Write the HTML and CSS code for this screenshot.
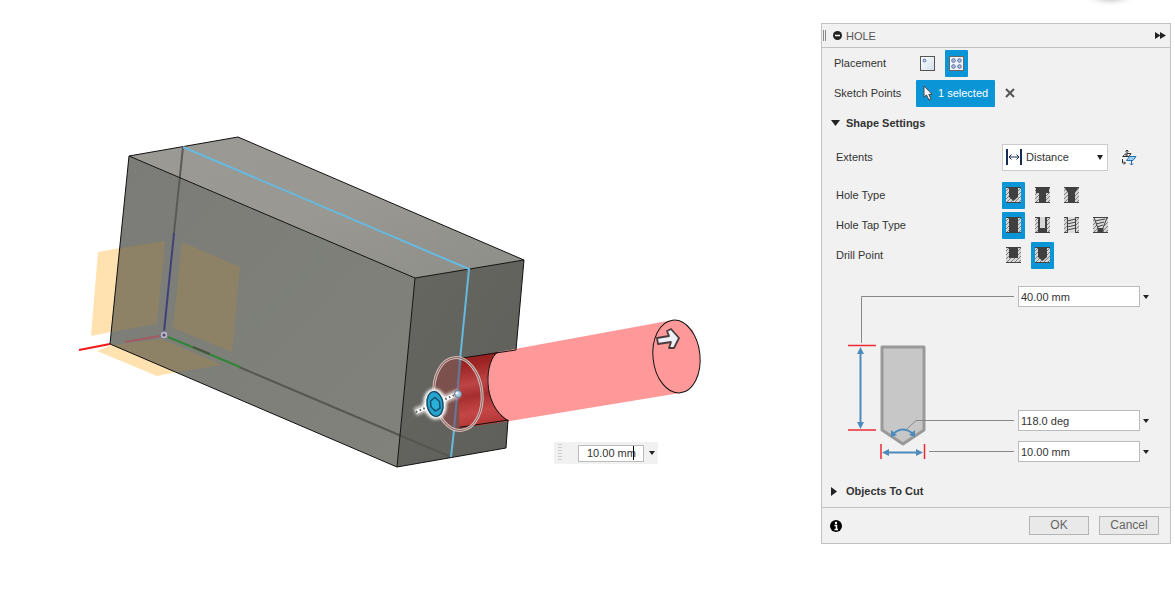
FILE: index.html
```html
<!DOCTYPE html>
<html lang="en">
<head>
<meta charset="utf-8">
<title>Hole</title>
<link rel="stylesheet" href="styles.css">
</head>
<body>
<svg class="defs" width="0" height="0" aria-hidden="true">
  <defs>
    <pattern id="hatch" width="4" height="4" patternUnits="userSpaceOnUse">
      <rect width="4" height="4" fill="#d6d6d6"/><path d="M-1 1L1 -1M0 4L4 0M3 5L5 3" stroke="#808080"/>
    </pattern>
    <linearGradient id="tile" x1="0" y1="0" x2="1" y2="1"><stop offset="0" stop-color="#fff"/><stop offset="1" stop-color="#d4dcec"/></linearGradient>
    <symbol id="block" viewBox="0 0 15 16"><rect width="15" height="16" fill="url(#hatch)"/><path d="M0 .5H15M0 15.5H15" stroke="#444"/></symbol>
  </defs>
</svg>
<main class="workspace">
  <svg class="scene" width="1175" height="589" viewBox="0 0 1175 589" role="img" aria-label="Block with a hole preview">
    <defs>
      <linearGradient id="side" x1="0" y1="0" x2="1" y2="1"><stop offset="0" stop-color="#7b7c77"/><stop offset="1" stop-color="#80827b"/></linearGradient>
      <linearGradient id="top" x1="0" y1="0" x2="1" y2="1"><stop offset="0" stop-color="#9b9994"/><stop offset=".5" stop-color="#999892"/><stop offset="1" stop-color="#8e8e88"/></linearGradient>
      <linearGradient id="end" x1="0" y1="0" x2="1" y2="1"><stop offset="0" stop-color="#666761"/><stop offset="1" stop-color="#5e5f5a"/></linearGradient>
      <linearGradient id="bore" x1="0" y1="0" x2=".15" y2="1"><stop offset="0" stop-color="#8b1d1c"/><stop offset=".2" stop-color="#9e2424"/><stop offset=".45" stop-color="#bd4545"/><stop offset=".6" stop-color="#a72e2e"/><stop offset=".82" stop-color="#c44646"/><stop offset="1" stop-color="#b43636"/></linearGradient>
      <radialGradient id="shade"><stop offset="0" stop-color="#aaa"/><stop offset="1" stop-color="#fff" stop-opacity="0"/></radialGradient>
      <filter id="glow" x="-50%" y="-50%" width="200%" height="200%"><feGaussianBlur stdDeviation="1.5"/></filter>
      <clipPath id="left-half"><path d="M420 340H463L455 440H420Z"/></clipPath>
    </defs>
    <ellipse cx="1110" cy="-3" rx="28" ry="10" fill="url(#shade)"/>
    <path d="M98 252L120 248L111 332L91 336ZM97 351L112 345L177 372L157 376Z" fill="#ffe2b0"/>
    <path d="M79 350L110 344" stroke="#f01818" stroke-width="2"/>
    <path d="M129 156L415 278L397 467L110 344Z" fill="url(#side)"/>
    <path d="M129 156L238 137L524 260L415 278Z" fill="url(#top)"/>
    <path d="M415 278L524 260L516 350L463 358L455 428L508 421L506 448L397 467Z" fill="url(#end)"/>
    <path d="M120 248L165 241L157 324L111 332ZM182 242L240 267L232 352L173 328ZM112 345L162 339L222 365L177 372Z" fill="#8e8266"/>
    <path d="M183 147L174 233" stroke="#595957" stroke-width="2"/>
    <path d="M174 233L164 332" stroke="#414079" stroke-width="2"/>
    <path d="M239 367L451 457" stroke="#565751" stroke-width="2"/>
    <path d="M168 337L240 367" stroke="#318535" stroke-width="2"/>
    <path d="M193 347L210 354" stroke="#4b5044" stroke-width="2"/>
    <path d="M125 342L160 336" stroke="#a45a61" stroke-width="2"/>
    <circle cx="164" cy="335" r="4" fill="#b9b5c5" stroke="#737181"/><circle cx="164" cy="335" r="1.5" fill="#4f4d63"/>
    <path d="M462 358L498 352C485 360 483 404 510 421L455 429Z" fill="url(#bore)"/>
    <path d="M498 352L673 320L693 330L698 371L680 393L510 421C485 408 481 368 498 352Z" fill="#ff9999"/>
    <ellipse cx="676.5" cy="356.5" rx="23.5" ry="36.5" transform="rotate(-6 676.5 356.5)" fill="#ff9999" stroke="#111"/>
    <path d="M498 352C485 360 481 404 508 421" fill="none" stroke="#111"/>
    <path d="M129 156L238 137L524 260L415 278ZM129 156L110 344L397 467L415 278M524 260L516 350L462 358M455 428L508 420L506 448L397 467" fill="none" stroke="#111"/>
    <ellipse cx="458" cy="394" rx="24.5" ry="37" transform="rotate(-6 458 394)" fill="#7c504c" clip-path="url(#left-half)"/>
    <path d="M183 147L469 269L460 360M454 430L451 457" fill="none" stroke="#67b9df" stroke-width="2"/>
    <path d="M460 360L454 430" stroke="#6c7595" stroke-width="2"/>
    <g fill="none" transform="rotate(-6 458 394)"><ellipse cx="458" cy="394" rx="24" ry="36.5" stroke="#d4bcb9" stroke-width="3"/><ellipse cx="458" cy="394" rx="24" ry="36.5" stroke="#8c6663"/></g>
    <path d="M415 412L459 393" stroke="#eee" stroke-width="8" opacity=".75" filter="url(#glow)"/>
    <ellipse cx="435" cy="404" rx="11.500" ry="15.500" transform="rotate(-8 435 404)" fill="#fff" filter="url(#glow)"/>
    <path d="M416 412L459 393" stroke="#fff" stroke-width="4"/>
    <path d="M416 412L459 393" stroke="#56545a" stroke-width="2" stroke-dasharray="1.5 2.5"/>
    <ellipse cx="435" cy="404" rx="8" ry="12.500" transform="rotate(-8 435 404)" fill="#25a4d0" stroke="#174c65" stroke-width="1.5"/>
    <path d="M430.500 401L435 397.500L439.500 401.500L440 408L435.500 411L431 407Z" fill="#2bb0da" stroke="#155169" stroke-width="1.5"/>
    <circle cx="458" cy="394" r="3.5" fill="#a8c4dc" stroke="#60738a"/><circle cx="457" cy="393" r="1.5" fill="#edf6fb"/>
    <path d="M657 338L669 336L667 331L671 329L679 338L674 348L669 348L671 342L658 344Z" fill="#edf1f7" stroke="#4a3c3e" stroke-width="1.800" stroke-linejoin="round"/>
  </svg>

  <div class="value-box">
    <span class="grip" aria-hidden="true"></span>
    <span class="live"><input class="value" aria-label="Diameter" value="10.00 mm"><i class="caret"></i></span>
    <button class="arrow" aria-label="Diameter options"></button>
  </div>

  <form class="panel">
    <header class="title">
      <span class="dock" aria-hidden="true"></span>
      <button type="button" class="plain" aria-label="Collapse"><svg width="9" height="9" viewBox="0 0 9 9"><circle cx="4.500" cy="4.500" r="4.500" fill="#222"/><path d="M2 4.500H7" stroke="#fff" stroke-width="1.500"/></svg></button>
      <h1>HOLE</h1>
      <button type="button" class="plain" aria-label="Expand"><svg width="11" height="7" viewBox="0 0 11 7"><path d="M0 0L5.500 3.500L0 7ZM5 0L11 3.500L5 7Z" fill="#222"/></svg></button>
    </header>

    <div class="row">
      <span class="label">Placement</span>
      <div class="choices">
        <button type="button" class="choice" aria-label="At point"><svg width="15" height="15" viewBox="0 0 15 15"><rect x=".5" y=".5" width="14" height="14" fill="url(#tile)" stroke="#555"/><circle cx="4.500" cy="4.500" r="1.500" fill="#b8cdf1" stroke="#627aa8"/></svg></button>
        <button type="button" class="choice on" aria-pressed="true" aria-label="From sketch"><svg width="15" height="15" viewBox="0 0 15 15"><rect x=".5" y=".5" width="14" height="14" fill="#f1f4fa" stroke="#6b6660"/><g fill="#a9c5ef" stroke="#546a97"><circle cx="4.500" cy="4.500" r="1.800"/><circle cx="10.500" cy="4.500" r="1.800"/><circle cx="4.500" cy="10.500" r="1.800"/><circle cx="10.500" cy="10.500" r="1.800"/></g></svg></button>
      </div>
    </div>
    <div class="row">
      <span class="label">Sketch Points</span>
      <button type="button" class="selected"><svg width="10" height="16" viewBox="0 0 10 16"><path d="M1 1V12L3.500 10L6 15L8 14L5.800 9.300H9Z" fill="#fff" stroke="#444"/></svg>1 selected</button>
      <button type="button" class="plain clear" aria-label="Clear selection"><svg width="10" height="10" viewBox="0 0 10 10"><path d="M1 1L9 9M9 1L1 9" stroke="#555" stroke-width="2"/></svg></button>
    </div>

    <button type="button" class="section"><svg width="9" height="6" viewBox="0 0 9 6"><path d="M0 0H9L4.500 6Z" fill="#222"/></svg>Shape Settings</button>

    <div class="row inner extents">
      <label class="label" for="extents">Extents</label>
      <div class="picker">
        <select id="extents"><option>Distance</option></select>
        <svg class="lead" width="16" height="16" viewBox="0 0 16 16"><path d="M1 0V16M15 0V16" stroke="#152c56" stroke-width="2"/><path d="M3 8H13M5.500 5.500L3 8L5.500 10.500M10.500 5.500L13 8L10.500 10.500" fill="none" stroke="#152c56"/></svg>
        <svg class="drop" width="6" height="5" viewBox="0 0 6 5"><path d="M0 0H6L3 5Z" fill="#222"/></svg>
      </div>
      <button type="button" class="plain flip" aria-label="Flip direction"><svg width="16" height="17" viewBox="0 0 16 17"><path d="M1.500 7.500L5 4.500V7.500Z" fill="#fafafa" stroke="#444"/><path d="M6 8V1M4.500 2.500L6 1L7.500 2.500M6 4.500H10L8 7.500H2M1.500 10V14H4M3 12.500L4.500 14L3 15.500" fill="none" stroke="#333"/><path d="M5.500 11.500L8.500 7.500H15L12 11.500Z" fill="#9bd0f2" stroke="#2473b0"/><path d="M10.500 11V16M9 14.500L10.500 16L12 14.500" fill="none" stroke="#1e65a6"/></svg></button>
    </div>

    <div class="row inner">
      <span class="label">Hole Type</span>
      <div class="choices">
        <button type="button" class="choice on" aria-pressed="true" aria-label="Simple"><svg width="15" height="16"><use href="#block"/><path d="M3 0H12V10L7.500 14L3 10Z" fill="#404040"/></svg></button>
        <button type="button" class="choice" aria-label="Counterbore"><svg width="15" height="16"><use href="#block"/><path d="M1 0H14V6H11V16H4V6H1Z" fill="#404040"/></svg></button>
        <button type="button" class="choice" aria-label="Countersink"><svg width="15" height="16"><use href="#block"/><path d="M1 0H14V1L11 6V16H4V6L1 1Z" fill="#404040"/></svg></button>
      </div>
    </div>
    <div class="row inner">
      <span class="label">Hole Tap Type</span>
      <div class="choices">
        <button type="button" class="choice on" aria-pressed="true" aria-label="Simple tap"><svg width="15" height="16"><use href="#block"/><path d="M3 0H12V16H3Z" fill="#404040"/></svg></button>
        <button type="button" class="choice" aria-label="Clearance"><svg width="15" height="16"><use href="#block"/><path d="M3 0H12V16H3Z" fill="#404040"/><path d="M5 0H10V11H5Z" fill="#d6d6d6"/></svg></button>
        <button type="button" class="choice" aria-label="Tapped"><svg width="15" height="16"><use href="#block"/><path d="M4 0H12V16H4Z" fill="#ddd"/><path d="M3.500 0V16M11.500 0V16M3 4L12 2M3 7L12 5M3 10L12 8M3 13L12 11" stroke="#444"/></svg></button>
        <button type="button" class="choice" aria-label="Taper tapped"><svg width="15" height="16"><use href="#block"/><path d="M1 .5H14L10 11V16H5V11Z" fill="#ddd" stroke="#444"/><path d="M2 4L12 2M3 7L11 5M4 10L10 8" stroke="#444"/><path d="M5 11H10V16H5Z" fill="#404040"/></svg></button>
      </div>
    </div>
    <div class="row inner">
      <span class="label">Drill Point</span>
      <div class="choices">
        <button type="button" class="choice" aria-label="Flat"><svg width="15" height="16"><use href="#block"/><path d="M3 0H12V11H3Z" fill="#404040"/></svg></button>
        <button type="button" class="choice on" aria-pressed="true" aria-label="Angle"><svg width="15" height="16"><use href="#block"/><path d="M3 0H12V10L7.500 14L3 10Z" fill="#404040"/></svg></button>
      </div>
    </div>

    <div class="dimensions">
      <svg width="166" height="176" viewBox="848 286 166 176" aria-hidden="true">
        <path d="M861.500 343V296.500H1014M929 451.500H1014" fill="none" stroke="#888"/>
        <path d="M882 347H924V430L903 444L882 430Z" fill="#c7c7c7" stroke="#999" stroke-width="3" stroke-linejoin="round"/>
        <path d="M905 431L916 420.500H1014" fill="none" stroke="#888"/>
        <path d="M848 345.500H876M848 430H876M881 444V459M924.500 444V459" stroke="#ed2b35" stroke-width="1.500"/>
        <path d="M860.500 350V425M886 452.500H919M893 434Q903 425 913 434" fill="none" stroke="#4e8bbd" stroke-width="2"/>
        <path d="M860.500 347L864 354H857ZM860.500 429L864 422H857ZM882 452.500L889 449V456ZM923 452.500L916 449V456ZM891 437V430L897 435ZM915 437V430L909 435Z" fill="#4e8bbd"/>
      </svg>
      <div class="fields">
        <div class="field"><input aria-label="Depth" value="40.00 mm"><button type="button" class="arrow" aria-label="Depth options"></button></div>
        <div class="field angle"><input aria-label="Tip angle" value="118.0 deg"><button type="button" class="arrow" aria-label="Angle options"></button></div>
        <div class="field"><input aria-label="Hole diameter" value="10.00 mm"><button type="button" class="arrow" aria-label="Hole diameter options"></button></div>
      </div>
    </div>

    <button type="button" class="section"><svg width="9" height="9" viewBox="0 0 9 9"><path d="M0 0L6 4.500L0 9Z" fill="#222"/></svg>Objects To Cut</button>

    <footer class="actions">
      <button type="button" class="plain info" aria-label="Information"><svg width="12" height="12" viewBox="0 0 12 12"><circle cx="6" cy="6" r="6" fill="#000"/><circle cx="6" cy="3" r="1.200" fill="#fff"/><path d="M4.500 5.500H6.500V9.500M4.500 9.500H8" fill="none" stroke="#fff" stroke-width="1.500"/></svg></button>
      <button type="button" class="action">OK</button>
      <button type="button" class="action">Cancel</button>
    </footer>
  </form>
</main>
</body>
</html>
```
FILE: styles.css
```css
* { box-sizing: border-box; }
body { margin: 0; background: #fff; color: #333; font: 11px/14px "Liberation Sans", Arial, sans-serif; }
button, input, select { font: inherit; color: inherit; margin: 0; padding: 0; border: 0; border-radius: 0; background: none; }
button { cursor: pointer; }
svg { display: block; flex: none; }
.defs { position: absolute; }

.workspace { position: relative; display: grid; min-height: 100vh; overflow: hidden; }
.scene { grid-area: 1 / 1; }

.panel {
  grid-area: 1 / 1;
  justify-self: end;
  align-self: start;
  width: 350px;
  margin: 23px 4px 0 0;
  background: #f1f1f1;
  border: 1px solid #c2c2c2;
}
.title { display: flex; align-items: center; height: 24px; padding: 0 4px 0 1px; border-bottom: 1px solid #c2c2c2; }
.title h1 { flex: 1; margin: 0 0 0 4px; font-size: 11px; font-weight: 400; color: #555; }
.dock { width: 3px; height: 11px; margin-right: 7px; border: solid #888; border-width: 0 1px; }
.plain { display: flex; align-items: center; justify-content: center; }

.row { display: grid; grid-template-columns: 82px auto 1fr; align-items: center; height: 30px; padding-left: 12px; }
.inner { grid-template-columns: 166px auto 1fr; padding-left: 14px; }
.extents { height: 38px; margin-bottom: 4px; }
.choices { display: flex; gap: 6px; }
.choice { display: flex; align-items: center; justify-content: center; width: 23px; height: 27px; border-radius: 1px; }
.choice.on { background: #0a95d6; }
.selected { display: flex; align-items: center; gap: 5px; height: 27px; padding: 0 7px; border-radius: 1px; background: #0a95d6; color: #fff; }
.clear { justify-self: start; margin-left: 10px; }
.section { display: flex; align-items: center; gap: 6px; width: 100%; height: 30px; padding-left: 9px; font-weight: 700; }

.picker { display: grid; align-items: center; width: 106px; }
.picker > * { grid-area: 1 / 1; }
.picker select { appearance: none; width: 100%; height: 27px; padding-left: 23px; background: #fff; border: 1px solid #ccc; }
.lead { margin-left: 4px; pointer-events: none; }
.drop { justify-self: end; margin-right: 5px; pointer-events: none; }
.flip { justify-self: start; margin-left: 13px; }

.dimensions { display: flex; gap: 4px; padding: 16px 20px 14px 26px; }
.fields { display: flex; flex: 1; flex-direction: column; gap: 10px; min-width: 0; }
.field { display: flex; align-items: center; gap: 2px; }
.field input { flex: 1; min-width: 0; height: 21px; padding-left: 2px; background: #fff; border: 1px solid #bbb; }
.angle { margin-top: auto; }
.arrow { display: grid; flex: none; place-items: center; width: 8px; height: 16px; }
.arrow::before { content: ""; border: 3px solid transparent; border-top: 4px solid #222; border-bottom: 0; }

.actions { display: flex; align-items: center; gap: 10px; height: 36px; margin-top: 1px; padding: 0 11px 0 8px; border-top: 1px solid #c2c2c2; }
.info { margin-right: auto; }
.action { width: 60px; height: 19px; border: 1px solid #b5b5b5; background: #e9e9e9; color: #666; font-size: 12px; line-height: 17px; }

.value-box { position: absolute; left: 554px; top: 442px; display: flex; align-items: center; gap: 4px; width: 104px; height: 22px; padding-left: 4px; background: #f1f1f1; }
.grip { width: 4px; height: 18px; margin-right: 12px; background: repeating-linear-gradient(#ccc 0 1px, transparent 1px 3px); }
.live { display: grid; align-items: center; }
.live > * { grid-area: 1 / 1; }
.value { width: 66px; height: 17px; padding-left: 8px; background: #fff; border: 1px solid #bbb; }
.caret { width: 1px; height: 14px; margin-left: 55px; background: #000; }
```
